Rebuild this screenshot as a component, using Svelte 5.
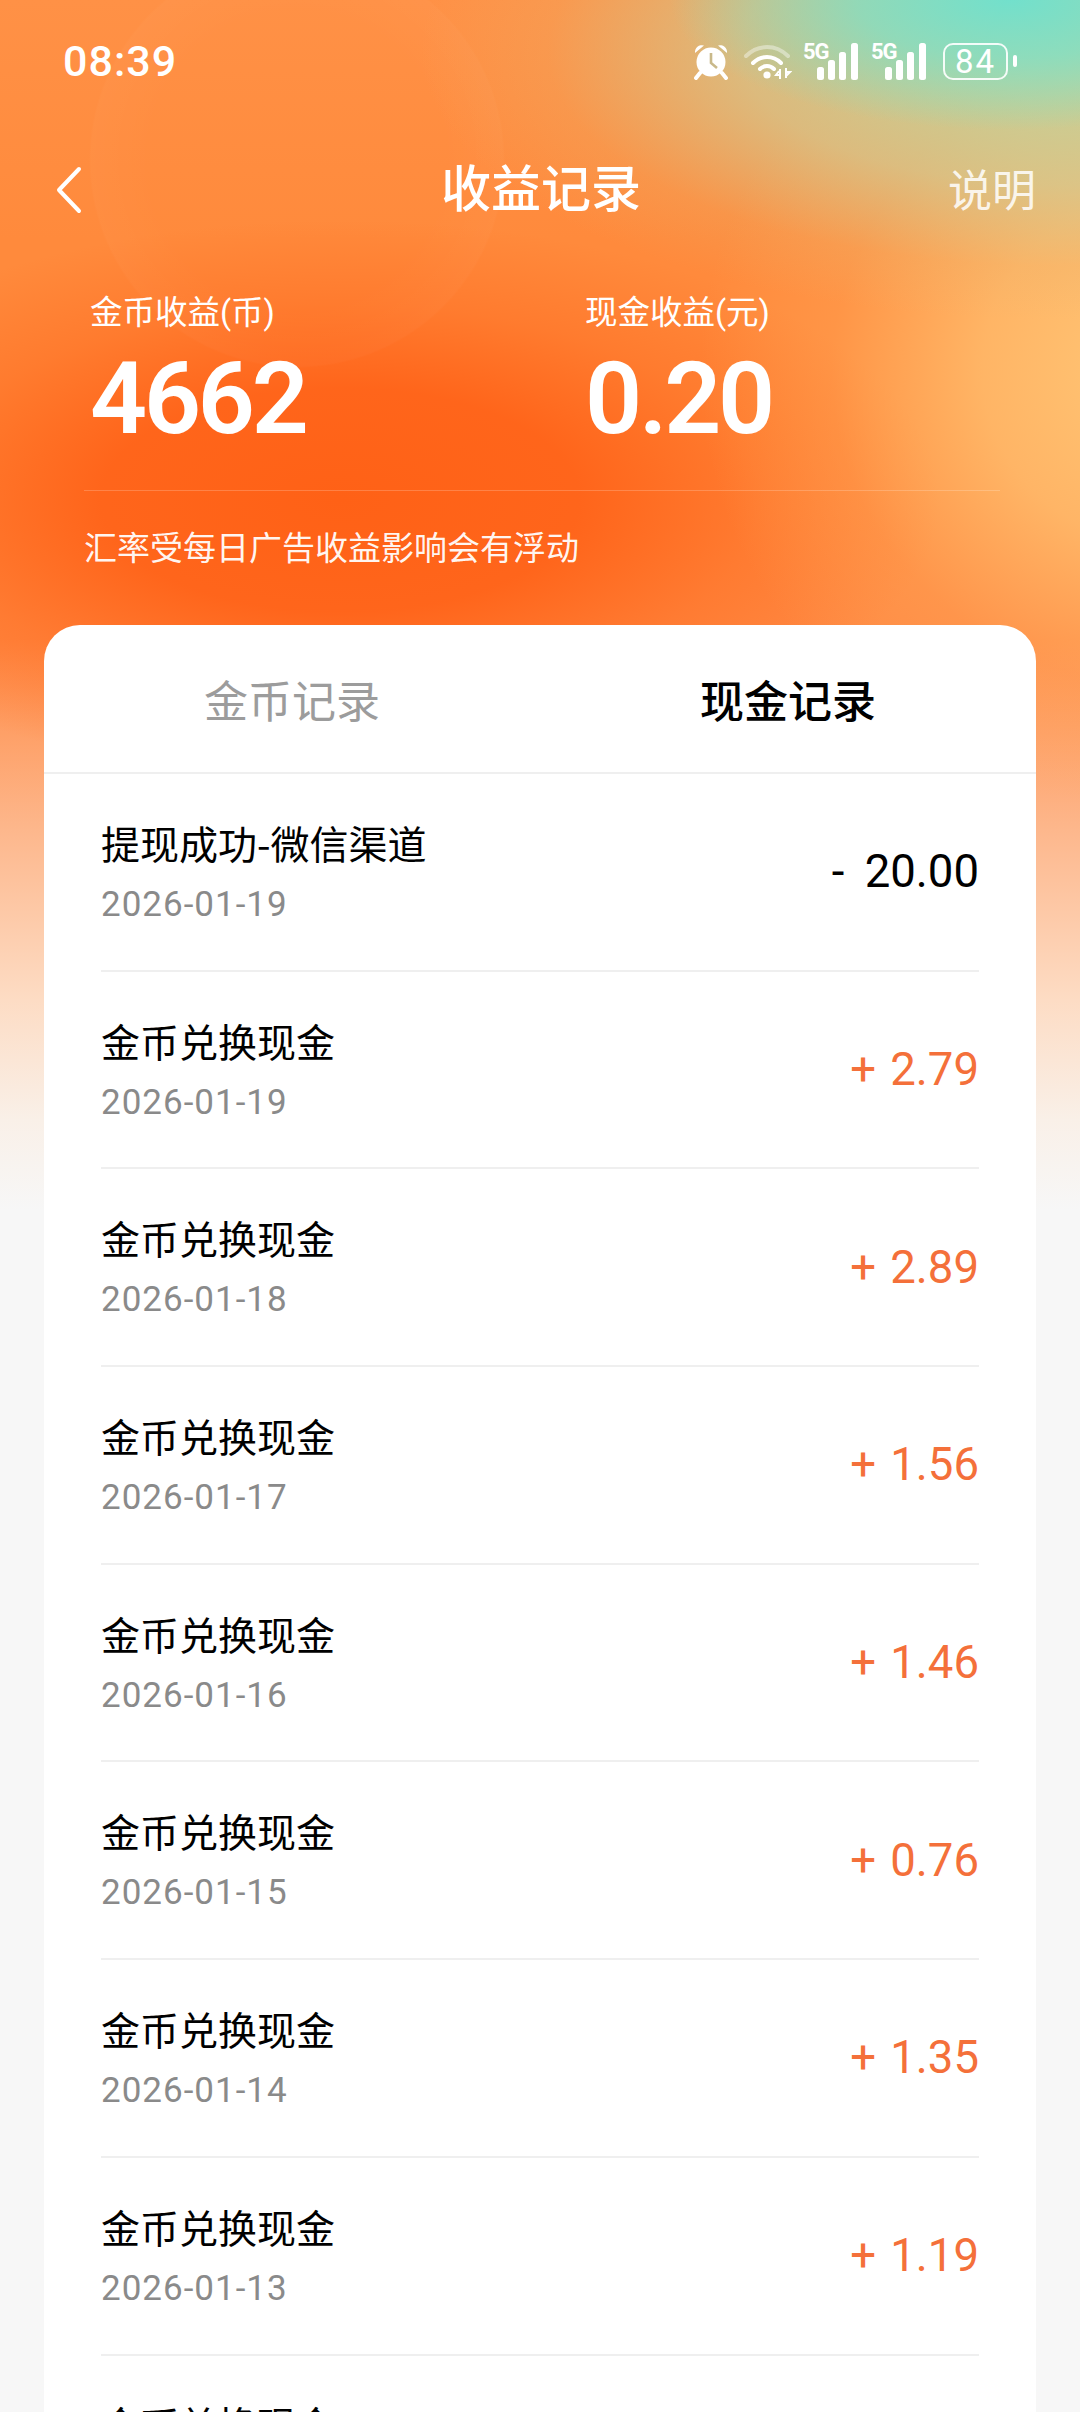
<script>
    const records = [
        { title: "提现成功-微信渠道", date: "2026-01-19", amount: "- 20.00", out: true },
        { title: "金币兑换现金", date: "2026-01-19", amount: "+ 2.79" },
        { title: "金币兑换现金", date: "2026-01-18", amount: "+ 2.89" },
        { title: "金币兑换现金", date: "2026-01-17", amount: "+ 1.56" },
        { title: "金币兑换现金", date: "2026-01-16", amount: "+ 1.46" },
        { title: "金币兑换现金", date: "2026-01-15", amount: "+ 0.76" },
        { title: "金币兑换现金", date: "2026-01-14", amount: "+ 1.35" },
        { title: "金币兑换现金", date: "2026-01-13", amount: "+ 1.19" },
        { title: "金币兑换现金", date: "2026-01-12", amount: "+ 1.22" }
    ];

    const bars = [
        { x: 14, h: 13 },
        { x: 25, h: 20 },
        { x: 36, h: 28 },
        { x: 48, h: 37 }
    ];
</script>

<main class="page">
    <div class="status">
        <span class="time">08:39</span>
        <div class="status-icons">
            <svg class="alarm" width="40" height="38" viewBox="0 0 40 38">
                <circle cx="20" cy="20" r="14.5" fill="#fff" />
                <path d="M4 11 A7 7 0 0 1 13 3.5 Z M36 11 A7 7 0 0 0 27 3.5 Z" fill="#fff" />
                <path d="M9 31 L5 36 M31 31 L35 36" stroke="#fff" stroke-width="4" stroke-linecap="round" />
                <path d="M20 11 V21 L26 26" fill="none" stroke="#c9b98a" stroke-width="2.6" />
            </svg>
            <svg width="48" height="36" viewBox="0 0 48 36">
                <path d="M2 13 C14 1 32 1 44 13" fill="none" stroke="#fff" stroke-opacity=".4" stroke-width="4" stroke-linecap="round" />
                <path d="M9 20 C17 12 29 12 37 20" fill="none" stroke="#fff" stroke-width="4" stroke-linecap="round" />
                <path d="M16 26 C20 22 26 22 30 26" fill="none" stroke="#fff" stroke-width="4" stroke-linecap="round" />
                <circle cx="23" cy="32" r="3.6" fill="#fff" />
                <path d="M36 36 V26 M35 28 L32 32 H36 M42 25 V35 M42 33 L46 29 H42" fill="none" stroke="#fff" stroke-width="2" />
            </svg>
            {#each [0, 1] as sim}
                <svg class="signal" width="57" height="42" viewBox="0 0 57 42">
                    <text class="net" x="0" y="21">5G</text>
                    {#each bars as b}
                        <rect x={b.x} y={42 - b.h} width="7" height={b.h} rx="2.5" fill="#fff" />
                    {/each}
                </svg>
            {/each}
            <div class="battery">
                <div class="battery-body">84</div>
                <div class="battery-nub"></div>
            </div>
        </div>
    </div>

    <header class="nav">
        <svg class="back" width="30" height="48" viewBox="0 0 30 48">
            <path d="M25 3 L5 24 L25 45" fill="none" stroke="#fff" stroke-width="4" stroke-linecap="round" stroke-linejoin="round" />
        </svg>
        <h1>收益记录</h1>
        <span class="explain">说明</span>
    </header>

    <section class="summary">
        <div class="totals">
            <div class="total">
                <div class="label">金币收益(币)</div>
                <div class="value">4662</div>
            </div>
            <div class="total">
                <div class="label">现金收益(元)</div>
                <div class="value">0.20</div>
            </div>
        </div>
        <p class="note">汇率受每日广告收益影响会有浮动</p>
    </section>

    <section class="card">
        <div class="tabs">
            <div class="tab">金币记录</div>
            <div class="tab active">现金记录</div>
        </div>
        <ul class="list">
            {#each records as r}
                <li class="row">
                    <div class="info">
                        <div class="title">{r.title}</div>
                        <div class="date">{r.date}</div>
                    </div>
                    <div class="amount" class:out={r.out}>{r.amount}</div>
                </li>
            {/each}
        </ul>
    </section>
</main>

<style>
    :global(body) {
        margin: 0;
        background: #f7f7f7;
    }

    .page {
        height: 2412px;
        overflow: hidden;
        box-sizing: border-box;
        font-family: "Roboto", "Noto Sans CJK SC", sans-serif;
        color: #fff;
        background:
            radial-gradient(circle 208px at 297px 160px, rgba(255, 255, 255, 0) 70%, rgba(255, 255, 255, 0.025) 99%, rgba(255, 255, 255, 0) 100%),
            radial-gradient(ellipse 340px 130px at 1010px 0px, #72e0cc 0%, rgba(130, 222, 195, 0.8) 45%, rgba(170, 215, 170, 0) 100%),
            radial-gradient(ellipse 640px 270px at 1060px 50px, rgba(185, 218, 165, 0.95) 0%, rgba(205, 205, 150, 0.7) 50%, rgba(230, 180, 110, 0.25) 80%, rgba(230, 180, 110, 0) 100%),
            radial-gradient(ellipse 470px 440px at 1170px 370px, #ffc878 0%, rgba(255, 195, 115, 0.75) 40%, rgba(255, 175, 95, 0.3) 72%, rgba(255, 170, 90, 0) 100%),
            radial-gradient(ellipse 600px 280px at 340px 500px, #ff6116 0%, rgba(255, 98, 24, 0.92) 40%, rgba(255, 105, 30, 0.45) 70%, rgba(255, 110, 40, 0) 100%),
            linear-gradient(180deg, #ff9146 0px, #ff8a3c 240px, #ff8a3c 430px, #ff8a44 640px, #fdb78c 830px, #fddcc4 1000px, #f9f0e8 1120px, #f7f7f7 1210px);
    }

    .status {
        height: 122px;
        box-sizing: border-box;
        padding: 0 63px;
        display: flex;
        align-items: center;
        justify-content: space-between;
    }

    .time {
        font-size: 43px;
        font-weight: 500;
        letter-spacing: 1px;
    }

    .status-icons {
        display: flex;
        align-items: center;
        gap: 11px;
    }

    .alarm {
        margin-right: 2px;
    }

    .signal {
        margin-top: -4px;
    }

    .net {
        font-family: "Roboto", sans-serif;
        font-size: 22px;
        font-weight: 700;
        letter-spacing: -1px;
        fill: #fff;
    }

    .battery {
        display: flex;
        align-items: center;
        gap: 5px;
        margin-left: 4px;
    }

    .battery-body {
        width: 65px;
        height: 37px;
        box-sizing: border-box;
        border: 2.5px solid rgba(255, 255, 255, 0.9);
        border-radius: 10px;
        display: flex;
        align-items: center;
        justify-content: center;
        font-size: 33px;
        letter-spacing: 2px;
    }

    .battery-nub {
        width: 4px;
        height: 12px;
        border-radius: 2px;
        background: #fff;
    }

    .nav {
        height: 136px;
        padding: 0 44px 0 54px;
        display: flex;
        align-items: center;
        justify-content: space-between;
    }

    .nav h1 {
        margin: 0 0 0 50px;
        font-size: 50px;
        font-weight: 500;
        line-height: 1;
    }

    .back {
        flex-shrink: 0;
    }

    .explain {
        margin-top: -5px;
        font-size: 44px;
        color: rgba(255, 255, 255, 0.85);
    }

    .summary {
        padding: 34px 80px 0 84px;
    }

    .totals {
        display: flex;
        padding: 0 6px 39px;
        border-bottom: 1px solid rgba(255, 255, 255, 0.2);
    }

    .total {
        flex: 0 0 495px;
    }

    .label {
        font-size: 32.5px;
        line-height: 42px;
    }

    .value {
        margin-top: 13px;
        font-size: 100px;
        font-weight: 600;
        line-height: 104px;
        letter-spacing: -3.2px;
    }

    .note {
        margin: 37px 0 0;
        font-size: 33px;
        line-height: 42px;
        color: rgba(255, 255, 255, 0.95);
    }

    .card {
        margin: 55px 44px 0;
        border-radius: 36px;
        background: #fff;
        color: #000;
    }

    .tabs {
        display: flex;
        height: 147px;
        border-bottom: 2px solid #efefef;
    }

    .tab {
        flex: 1;
        display: flex;
        align-items: center;
        justify-content: center;
        font-size: 44px;
        color: #9c9c9c;
    }

    .tab.active {
        color: #000;
        font-weight: 500;
    }

    .list {
        list-style: none;
        margin: 0;
        padding: 0 57px;
    }

    .row {
        height: 197.7px;
        box-sizing: border-box;
        display: flex;
        align-items: center;
        justify-content: space-between;
        border-bottom: 2px solid #efefef;
    }

    .title {
        font-family: "Noto Sans CJK SC", sans-serif;
        font-size: 39px;
        line-height: 50px;
    }

    .date {
        margin-top: 16px;
        font-size: 35px;
        line-height: 44px;
        letter-spacing: 1px;
        color: #8a8a8a;
    }

    .amount {
        font-size: 45.5px;
        word-spacing: 3px;
        color: #f4703a;
    }

    .amount.out {
        word-spacing: 9px;
        color: #000;
    }
</style>
